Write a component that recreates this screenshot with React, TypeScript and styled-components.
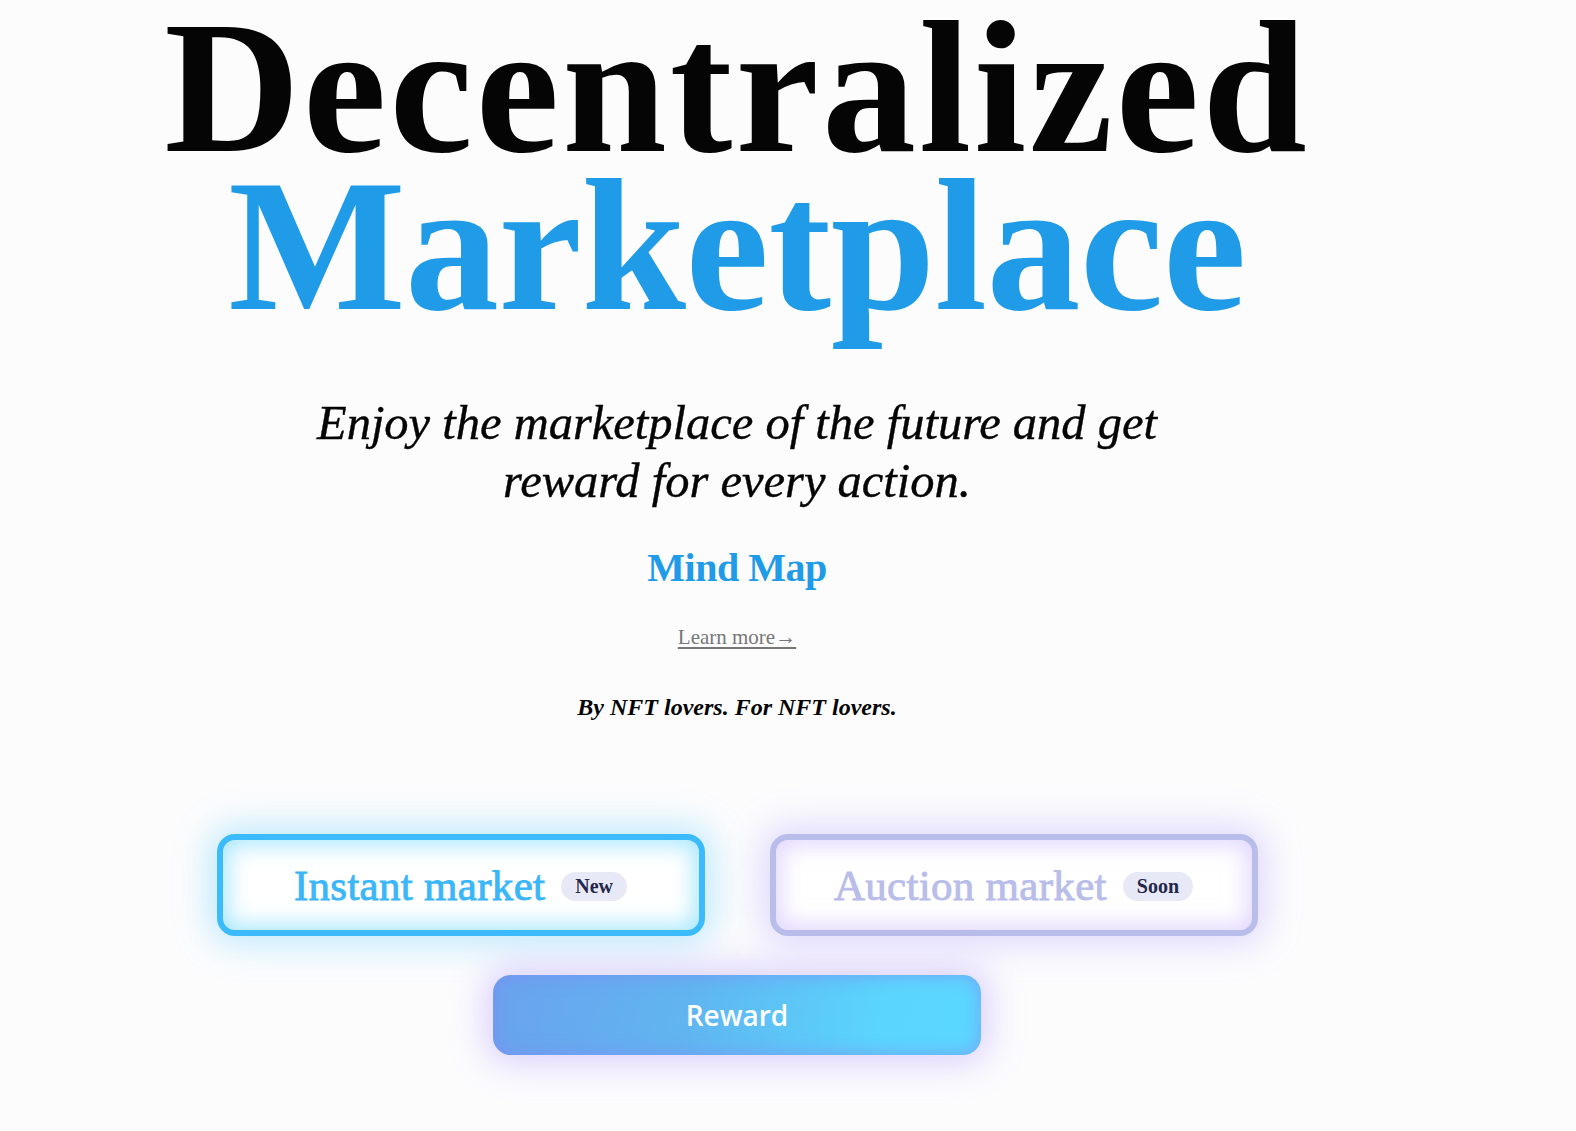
import React from "react";
import styled, { createGlobalStyle, css } from "styled-components";

const Global = createGlobalStyle`
  html, body { margin: 0; padding: 0; background: #fcfcfd; }
  body { font-family: "Liberation Serif", "Times New Roman", serif; }
`;

const Page = styled.main`
  width: 1474px;
  display: flex;
  flex-direction: column;
  align-items: center;
  padding-bottom: 80px;
`;

const Title = styled.h1`
  margin: 0;
  display: flex;
  flex-direction: column;
  align-items: center;
  font-family: "Liberation Serif", "Times New Roman", serif;
  font-weight: 700;
  font-size: 188px;
  line-height: 158px;
  padding-top: 9px;
`;

const TitleLine = styled.span<{ $blue?: boolean }>`
  display: block;
  color: ${(p) => (p.$blue ? "#1f9be8" : "#050505")};
  letter-spacing: ${(p) => (p.$blue ? "-0.5px" : "3px")};
`;

const Subtitle = styled.p`
  margin: 69px 0 0;
  font-family: "Liberation Serif", "Times New Roman", serif;
  font-style: italic;
  font-size: 48.5px;
  line-height: 58px;
  text-align: center;
  color: #050505;
  width: 900px;
  -webkit-text-stroke: 0.4px #050505;
`;

const MindMap = styled.a`
  margin-top: 33px;
  font-family: "Liberation Serif", "Times New Roman", serif;
  font-weight: 700;
  font-size: 40px;
  line-height: 50px;
  color: #1f9be8;
  text-decoration: none;
  letter-spacing: -0.5px;
`;

const LearnMore = styled.a`
  margin-top: 29px;
  font-family: "Liberation Serif", "Times New Roman", serif;
  font-size: 21px;
  line-height: 30px;
  color: #777777;
  text-decoration: underline;
  text-underline-offset: 3px;
`;

const Tagline = styled.p`
  margin: 40px 0 0;
  font-family: "Liberation Serif", "Times New Roman", serif;
  font-style: italic;
  font-weight: 700;
  font-size: 24px;
  line-height: 30px;
  color: #050505;
`;

const Row = styled.div`
  margin-top: 112px;
  display: flex;
  gap: 65px;
`;

type Variant = "blue" | "purple";

const MarketButton = styled.button<{ $variant: Variant }>`
  box-sizing: border-box;
  width: 488px;
  height: 102px;
  border-radius: 18px;
  display: flex;
  align-items: center;
  justify-content: center;
  gap: 16px;
  background: #ffffff;
  cursor: pointer;
  font-family: "Liberation Serif", "Times New Roman", serif;
  font-size: 43px;
  padding: 0;
  ${(p) =>
    p.$variant === "blue"
      ? css`
          border: 6px solid #3bbbfc;
          color: #3bb6f9;
          box-shadow: 0 0 34px 8px rgba(80, 200, 255, 0.35),
            inset 0 0 22px 5px rgba(110, 215, 255, 0.6);
        `
      : css`
          border: 6px solid #b9bdea;
          color: #b8bde9;
          box-shadow: 0 0 34px 8px rgba(180, 160, 255, 0.38),
            inset 0 0 22px 5px rgba(200, 180, 255, 0.55);
        `}
`;

const ButtonLabel = styled.span`
  -webkit-text-stroke: 0.9px currentColor;
  letter-spacing: 0.3px;
`;

const Badge = styled.span`
  display: inline-flex;
  align-items: center;
  height: 29px;
  padding: 0 14px;
  border-radius: 15px;
  background: #e8e9f6;
  color: #24274a;
  font-family: "Liberation Serif", "Times New Roman", serif;
  font-weight: 700;
  font-size: 20px;
  margin-top: 2px;
`;

const RewardButton = styled.button`
  margin-top: 39px;
  width: 488px;
  height: 80px;
  border: none;
  border-radius: 18px;
  background: linear-gradient(100deg, #6aa2ee 0%, #60b5f0 40%, #5ad6fe 80%, #5bd8ff 100%);
  box-shadow: 0 0 34px 8px rgba(175, 150, 255, 0.42),
    inset 0 0 16px 3px rgba(130, 140, 245, 0.55);
  color: #ffffff;
  font-family: "Open Sans", "Noto Sans", sans-serif;
  font-weight: 600;
  font-size: 28px;
  cursor: pointer;
`;

export default function App() {
  return (
    <>
      <Global />
      <Page>
        <Title>
          <TitleLine>Decentralized</TitleLine>
          <TitleLine $blue>Marketplace</TitleLine>
        </Title>
        <Subtitle>
          Enjoy the marketplace of the future and get reward for every action.
        </Subtitle>
        <MindMap href="#">Mind Map</MindMap>
        <LearnMore href="#">Learn more→</LearnMore>
        <Tagline>By NFT lovers. For NFT lovers.</Tagline>
        <Row>
          <MarketButton $variant="blue">
            <ButtonLabel>Instant market</ButtonLabel>
            <Badge>New</Badge>
          </MarketButton>
          <MarketButton $variant="purple">
            <ButtonLabel>Auction market</ButtonLabel>
            <Badge>Soon</Badge>
          </MarketButton>
        </Row>
        <RewardButton>Reward</RewardButton>
      </Page>
    </>
  );
}
